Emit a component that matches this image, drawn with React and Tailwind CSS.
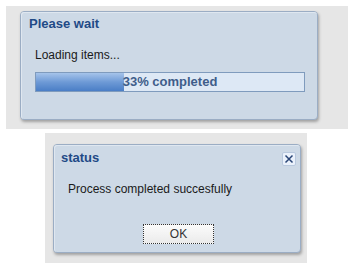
const font = { fontFamily: '"Liberation Sans", Arial, sans-serif' }

function Panel({ className, children }) {
  return (
    <div
      className={`rounded-[4px] border border-[#9badc4] bg-[#cdd9e6] shadow-[1px_2px_3px_rgba(0,0,0,0.3)] ${className}`}
    >
      <div className="h-full w-full rounded-[3px] border border-[#dfe7f0] border-b-0 border-r-0">
        {children}
      </div>
    </div>
  )
}

function ProgressBar({ value }) {
  return (
    <div className="relative h-[20px] w-[270px] border border-[#7f9bbd] bg-[#dde8f5]">
      <div
        className="h-full bg-gradient-to-b from-[#a6c4ea] via-[#6e9ad6] to-[#4a7ec6]"
        style={{ width: `${value}%` }}
      />
      <div className="absolute inset-0 flex items-center justify-center text-[13px] font-bold leading-[18px] text-[#3f5d8a]">
        {value}% completed
      </div>
    </div>
  )
}

export default function App() {
  return (
    <div className="h-[275px] w-[360px] bg-white pt-[6px]" style={font}>
      <div className="ml-[6px] h-[123px] w-[342px] bg-[#e6e6e6] pl-[14px] pt-[5px]">
        <Panel className="h-[109px] w-[298px]">
          <div className="pl-[7px] pt-[3px] text-[13px] font-bold leading-[16px] text-[#1f4a86]">
            Please wait
          </div>
          <div className="mt-[16px] pl-[13px] text-[12px] leading-[15px] text-[#1a1a1a]">
            Loading items...
          </div>
          <div className="mt-[9px] pl-[13px]">
            <ProgressBar value={33} />
          </div>
        </Panel>
      </div>

      <div className="ml-[45px] mt-[4px] h-[130px] w-[262px] bg-[#e6e6e6] pl-[8px] pt-[11px]">
        <Panel className="h-[109px] w-[248px]">
          <div className="flex items-start justify-between pl-[6px] pr-[4px] pt-[4px]">
            <span className="text-[13px] font-bold leading-[16px] text-[#1f4a86]">status</span>
            <button className="mt-[2px] flex h-[14px] w-[14px] items-center justify-center rounded-[2px] border border-[#b9c9de] bg-[#eaf1fb]">
              <svg width="10" height="10" viewBox="0 0 10 10">
                <path d="M1.5 1.5 L8.5 8.5 M8.5 1.5 L1.5 8.5" stroke="#2a4677" strokeWidth="1.5" fill="none" />
              </svg>
            </button>
          </div>
          <div className="mt-[16px] pl-[13px] text-[12px] leading-[15px] text-[#1a1a1a]">
            Process completed succesfully
          </div>
          <div className="mt-[27px] pl-[88px]">
            <button className="flex h-[20px] w-[71px] items-center justify-center border border-dotted border-[#333] bg-gradient-to-b from-[#fbfbfb] to-[#ebebeb] text-[12px] leading-[14px] text-[#333]">
              OK
            </button>
          </div>
        </Panel>
      </div>
    </div>
  )
}
